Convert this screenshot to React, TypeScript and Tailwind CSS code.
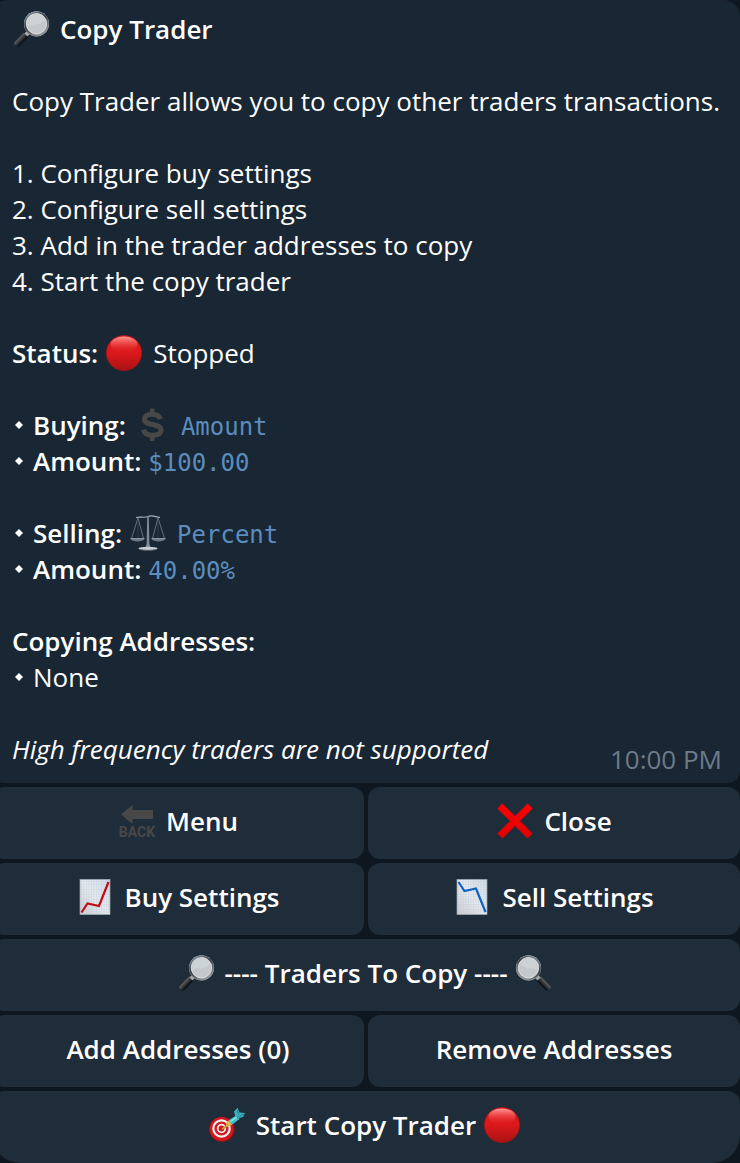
import type { ReactNode } from "react";

const Magnifier = ({ flip = false }: { flip?: boolean }) => (
  <svg
    viewBox="1 0 41 36"
    className="h-9 w-[41px] shrink-0 self-center"
    aria-hidden="true"
  >
    <defs>
      <linearGradient id="rim" x1="0" y1="0" x2="0.6" y2="1">
        <stop offset="0" stopColor="#8fa3b5" />
        <stop offset="0.5" stopColor="#33373c" />
        <stop offset="1" stopColor="#8d8f92" />
      </linearGradient>
      <linearGradient id="handle" x1="0" y1="0" x2="1" y2="1">
        <stop offset="0.2" stopColor="#16181b" />
        <stop offset="0.4" stopColor="#55585c" />
        <stop offset="0.65" stopColor="#08090b" />
      </linearGradient>
    </defs>
    <g transform={flip ? "translate(40 0) scale(-1 1)" : undefined}>
      <path d="M15.500 20.500l3 3-3.500 3-3-3z" fill="#a5a7aa" />
      <path d="M12.500 21.500l4.500 4.500-9 9.200c-2.200 1.600-6-2-4.400-4.400z" fill="url(#handle)" />
      <circle cx="25.500" cy="12.800" r="12.600" fill="#b8bdc2" />
      <circle cx="25.500" cy="12.800" r="11.500" fill="#c9ccce" stroke="url(#rim)" strokeWidth="1.800" />
      <circle cx="25.500" cy="12.800" r="10" fill="#c5c8ca" stroke="#dcdfe0" strokeWidth="0.8" />
      <path d="M17 15c4-3 9 1 17-6-1-5-5-7-9-6.500S16 8 17 15z" fill="#cfd2d4" />
    </g>
  </svg>
);

const RedCircle = () => (
  <svg
    viewBox="1 0 41 36"
    className="h-9 w-[41px] shrink-0 self-center"
    aria-hidden="true"
  >
    <defs>
      <linearGradient id="ball" x1="0" y1="0" x2="0" y2="1">
        <stop offset="0" stopColor="#e3191c" />
        <stop offset="0.5" stopColor="#dc181a" />
        <stop offset="1" stopColor="#a91214" />
      </linearGradient>
      <linearGradient id="shine" x1="0" y1="0" x2="0" y2="1">
        <stop offset="0" stopColor="#ff9a98" />
        <stop offset="1" stopColor="#e2201f" stopOpacity="0.1" />
      </linearGradient>
    </defs>
    <circle cx="20" cy="18" r="17.600" fill="url(#ball)" stroke="#a51519" strokeWidth="0.8" />
    <ellipse cx="20" cy="9.500" rx="13.500" ry="8" fill="url(#shine)" />
  </svg>
);

const Dollar = () => (
  <svg
    viewBox="1 0 41 36"
    className="h-9 w-[41px] shrink-0 self-center"
    aria-hidden="true"
  >
    <path
      d="M28.500 12C27.500 8.600 24.500 7.200 20.300 7.200c-4.800 0-7.800 2-7.800 5 0 7.300 16.600 3.400 16.600 10.800 0 3.400-3.400 5.200-8.600 5.200-5 0-8.200-1.900-9.100-5.600"
      fill="none"
      stroke="#484848"
      strokeWidth="5"
    />
    <path d="M18 1.500h4.500v5H18zM18 28.500h4.500v5.500H18z" fill="#484848" />
  </svg>
);

const Scales = () => (
  <svg
    viewBox="1 0 41 36"
    className="h-9 w-[41px] shrink-0 self-center"
    aria-hidden="true"
  >
    <g fill="none" stroke="#74838f" strokeWidth="0.8">
      <path d="M10 3L3.500 23.500M10 3l5.500 20.500M30 3l-5.500 20.500M30 3l6.500 20.500" />
      <path d="M10 4v20M30 4v20" stroke="#465460" strokeWidth="0.6" />
    </g>
    <path d="M8 2.500C12 1 16 3.500 20 1.500s8 .8 12 1" fill="none" stroke="#a3afb9" strokeWidth="1.200" />
    <path d="M19.200 1h1.600l.6 28 1.400 4h-5.600l1.400-4z" fill="#7d8b97" />
    <path d="M2.500 23.500h14c-1 4-13 4-14 0zM23.500 23.500h14c-1 4-13 4-14 0z" fill="#677581" />
    <path d="M2.500 23.700h14M23.500 23.700h14" stroke="#b0bac2" strokeWidth="0.8" />
    <ellipse cx="20" cy="33.500" rx="9.500" ry="1.800" fill="#c8cdd1" />
    <path d="M12 34.500c4 1 12 1 16 0" stroke="#5c6369" strokeWidth="0.8" fill="none" />
  </svg>
);

const Back = () => (
  <svg
    viewBox="1 0 41 36"
    className="h-9 w-[41px] shrink-0 self-center"
    aria-hidden="true"
  >
    <path d="M4 11.500L15.500 2v5H36v9H15.500v5z" fill="#484848" />
    <text
      x="20"
      y="34"
      textAnchor="middle"
      fill="#484848"
      className="font-['Roboto'] text-[14px] font-bold"
    >
      BACK
    </text>
  </svg>
);

const Cross = () => (
  <svg
    viewBox="1 0 41 36"
    className="h-9 w-[41px] shrink-0 self-center"
    aria-hidden="true"
  >
    <defs>
      <linearGradient id="cross" x1="0" y1="0" x2="0" y2="1">
        <stop offset="0" stopColor="#ff0000" />
        <stop offset="1" stopColor="#df0000" />
      </linearGradient>
    </defs>
    <path
      d="M7.400 0.400L20 13 32.600 0.400l5 5L25 18l12.600 12.600-5 5L20 23 7.400 35.600l-5-5L15 18 2.400 5.400z"
      fill="url(#cross)"
    />
  </svg>
);

const Chart = ({ line, color }: { line: string; color: string }) => (
  <svg
    viewBox="1 0 41 36"
    className="h-9 w-[41px] shrink-0 self-center"
    aria-hidden="true"
  >
    <defs>
      <linearGradient id="paper" x1="1" y1="0" x2="0" y2="1">
        <stop offset="0" stopColor="#d3dde7" />
        <stop offset="0.5" stopColor="#e6ebf0" />
        <stop offset="1" stopColor="#cbcdd1" />
      </linearGradient>
      <pattern id="grid" width="2.500" height="2.500" patternUnits="userSpaceOnUse">
        <path d="M2.500 0H0v2.500" fill="none" stroke="#b4c3d2" strokeWidth="0.5" />
      </pattern>
    </defs>
    <rect x="4" y="0.500" width="30" height="35" fill="url(#paper)" />
    <rect x="4" y="0.500" width="30" height="35" fill="url(#grid)" stroke="#9da8b2" strokeWidth="0.7" />
    <path d={line} fill="none" stroke={color} strokeWidth="2.200" />
  </svg>
);

const Target = () => (
  <svg
    viewBox="1 0 41 36"
    className="h-9 w-[41px] shrink-0 self-center"
    aria-hidden="true"
  >
    <ellipse cx="15" cy="22.500" rx="12.700" ry="12.500" fill="#8e1115" />
    <circle cx="14.500" cy="22" r="12" fill="#cf171c" />
    <circle cx="14.500" cy="21.500" r="8.200" fill="#d0191e" stroke="#f3eeee" strokeWidth="2.200" />
    <circle cx="14.500" cy="21.500" r="3.800" fill="#cf171c" stroke="#f3eeee" strokeWidth="1.800" />
    <path d="M15 22l6.500-4" stroke="#c79a35" strokeWidth="2" />
    <path d="M20 19.500l2-6.500 7-4.500 3.500 3.500-6.500 5z" fill="#43bfc8" />
    <path d="M19 19.500l.5-4 2-2 3.500 4.500z" fill="#e8b43c" />
    <path d="M28.500 9.500L27 4.500 30.500.8l2 4.700 5.500.5-2 4-5.500 1.500z" fill="#3bb2bd" />
    <path d="M31.500 8l-1-5M30 10.500L37 7" stroke="#1c7380" strokeWidth="0.8" />
    <path d="M23.500 14.500l6-4.200" stroke="#9be6e8" strokeWidth="1.200" />
  </svg>
);

const Bullet = () => (
  <svg
    viewBox="0 0 14 14"
    className="size-3.5 shrink-0 self-center"
    aria-hidden="true"
  >
    <path d="M7 3l4 4-4 4-4-4z" fill="#fff" />
  </svg>
);

const Line = ({ children }: { children: ReactNode }) => (
  <p className="flex h-9 items-baseline gap-[7px]">{children}</p>
);

const Value = ({ children }: { children: ReactNode }) => (
  <code className="font-['DejaVu_Sans_Mono',monospace] text-[24px] leading-none text-[#5b8dbe]">
    {children}
  </code>
);

const KeyButton = ({
  children,
  className = "rounded-xl",
}: {
  children: ReactNode;
  className?: string;
}) => (
  <button
    type="button"
    className={`flex h-18 items-center justify-center gap-[7px] bg-[#1f2c39] pb-1 font-semibold ${className}`}
  >
    {children}
  </button>
);

export default function App() {
  return (
    <main className="overflow-hidden bg-[#0e1620] font-['Open_Sans',sans-serif] text-[26px] leading-9 text-white">
      {/* the bubble runs past the left edge of the window */}
      <div className="-ml-2 flex flex-col gap-1">
        <section className="rounded-t-2xl rounded-b-xl bg-[#192633] pt-[11px] pr-3 pb-1.5 pl-5">
          <h1 className="flex items-center gap-[7px] font-semibold">
            <Magnifier />
            Copy Trader
          </h1>
          <p className="mt-9">
            Copy Trader allows you to copy other traders transactions.
          </p>
          <ol className="mt-9">
            <li>1. Configure buy settings</li>
            <li>2. Configure sell settings</li>
            <li>3. Add in the trader addresses to copy</li>
            <li>4. Start the copy trader</li>
          </ol>
          <div className="mt-9">
            <Line>
              <b className="font-semibold">Status:</b>
              <RedCircle />
              Stopped
            </Line>
          </div>
          <div className="mt-9">
            <Line>
              <Bullet />
              <b className="font-semibold">Buying:</b>
              <Dollar />
              <Value>Amount</Value>
            </Line>
            <Line>
              <Bullet />
              <b className="font-semibold">Amount:</b>
              <Value>$100.00</Value>
            </Line>
          </div>
          <div className="mt-9">
            <Line>
              <Bullet />
              <b className="font-semibold">Selling:</b>
              <Scales />
              <Value>Percent</Value>
            </Line>
            <Line>
              <Bullet />
              <b className="font-semibold">Amount:</b>
              <Value>40.00%</Value>
            </Line>
          </div>
          <div className="mt-9">
            <h2 className="font-semibold">Copying Addresses:</h2>
            <Line>
              <Bullet />
              None
            </Line>
          </div>
          <div className="mt-9 flex justify-between">
            <em>High frequency traders are not supported</em>
            <time className="mt-2.5 mr-1.5 text-[#6c7b88]">10:00 PM</time>
          </div>
        </section>

        <div className="grid grid-cols-2 gap-1">
          <KeyButton>
            <Back />
            Menu
          </KeyButton>
          <KeyButton>
            <Cross />
            Close
          </KeyButton>
          <KeyButton>
            <Chart line="M5.500 33.500L11.500 24.500l11.500 2.500L32.500 3" color="#c00d16" />
            Buy Settings
          </KeyButton>
          <KeyButton>
            <Chart line="M5.500 3L11.500 12l11.500-2.500L32.500 33" color="#0f62c0" />
            Sell Settings
          </KeyButton>
          <KeyButton className="col-span-2 rounded-xl">
            <Magnifier />
            ---- Traders To Copy ----
            <Magnifier flip />
          </KeyButton>
          <KeyButton>Add Addresses (0)</KeyButton>
          <KeyButton>Remove Addresses</KeyButton>
          <KeyButton className="col-span-2 rounded-t-xl rounded-b-[28px]">
            <Target />
            Start Copy Trader
            <RedCircle />
          </KeyButton>
        </div>
      </div>
    </main>
  );
}
